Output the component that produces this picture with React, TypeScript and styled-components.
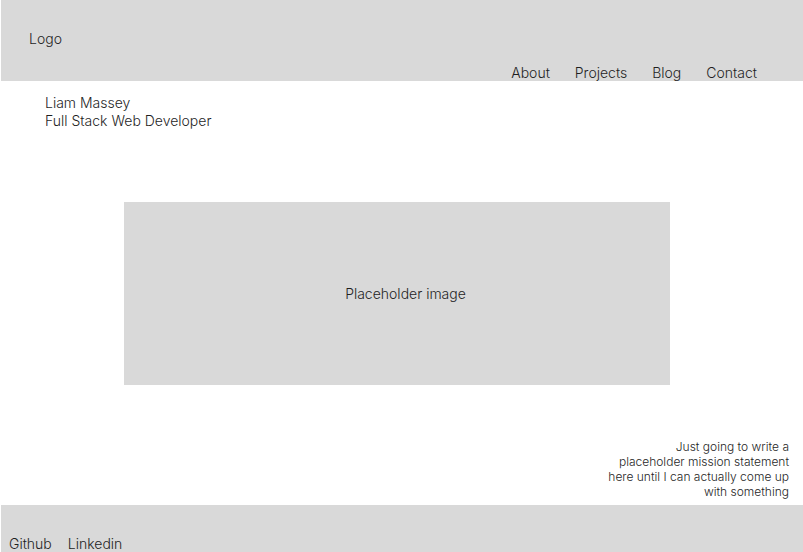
import React from 'react'
import styled, { createGlobalStyle } from 'styled-components'

const GlobalStyle = createGlobalStyle`
  html, body {
    margin: 0;
    padding: 0;
    background: #fff;
  }
  body {
    font-family: Inter, "Noto Sans", sans-serif;
    font-weight: 300;
    color: #1f1f1f;
  }
`

const Page = styled.div`
  display: flex;
  flex-direction: column;
  height: 552px;
  padding-left: 1px;
  box-sizing: border-box;
`

const Header = styled.header`
  display: flex;
  justify-content: space-between;
  height: 81px;
  background: #d9d9d9;
  flex-shrink: 0;
`

const Logo = styled.div`
  align-self: center;
  padding-left: 28px;
  font-size: 14px;
  line-height: 17px;
  margin-top: -4px;
`

const Nav = styled.nav`
  display: flex;
  align-self: flex-end;
  gap: 25px;
  padding-right: 46px;
`

const NavLink = styled.a`
  font-size: 14px;
  line-height: 17px;
  color: inherit;
  text-decoration: none;
`

const Intro = styled.section`
  padding: 13px 0 0 44px;
  font-size: 14px;
  line-height: 18px;
`

const ImageBox = styled.div`
  display: flex;
  align-items: center;
  justify-content: center;
  box-sizing: border-box;
  width: 546px;
  height: 183px;
  margin: 72px 0 0 123px;
  padding-left: 17px;
  background: #d9d9d9;
  font-size: 14px;
`

const Mission = styled.p`
  align-self: flex-end;
  margin: 54px 14px 0 0;
  text-align: right;
  white-space: nowrap;
  font-size: 12px;
  line-height: 15px;
`

const Footer = styled.footer`
  display: flex;
  align-items: flex-end;
  gap: 16px;
  margin-top: auto;
  height: 47px;
  padding-left: 8px;
  background: #d9d9d9;
  flex-shrink: 0;
`

const FooterLink = styled.a`
  font-size: 14px;
  line-height: 17px;
  color: inherit;
  text-decoration: none;
`

const App: React.FC = () => (
  <>
    <GlobalStyle />
    <Page>
      <Header>
        <Logo>Logo</Logo>
        <Nav>
          {['About', 'Projects', 'Blog', 'Contact'].map((item) => (
            <NavLink key={item} href="#">{item}</NavLink>
          ))}
        </Nav>
      </Header>
      <Intro>
        <div>Liam Massey</div>
        <div>Full Stack Web Developer</div>
      </Intro>
      <ImageBox>Placeholder image</ImageBox>
      <Mission>
        Just going to write a<br />
        placeholder mission statement<br />
        here until I can actually come up<br />
        with something
      </Mission>
      <Footer>
        <FooterLink href="#">Github</FooterLink>
        <FooterLink href="#">Linkedin</FooterLink>
      </Footer>
    </Page>
  </>
)

export default App
